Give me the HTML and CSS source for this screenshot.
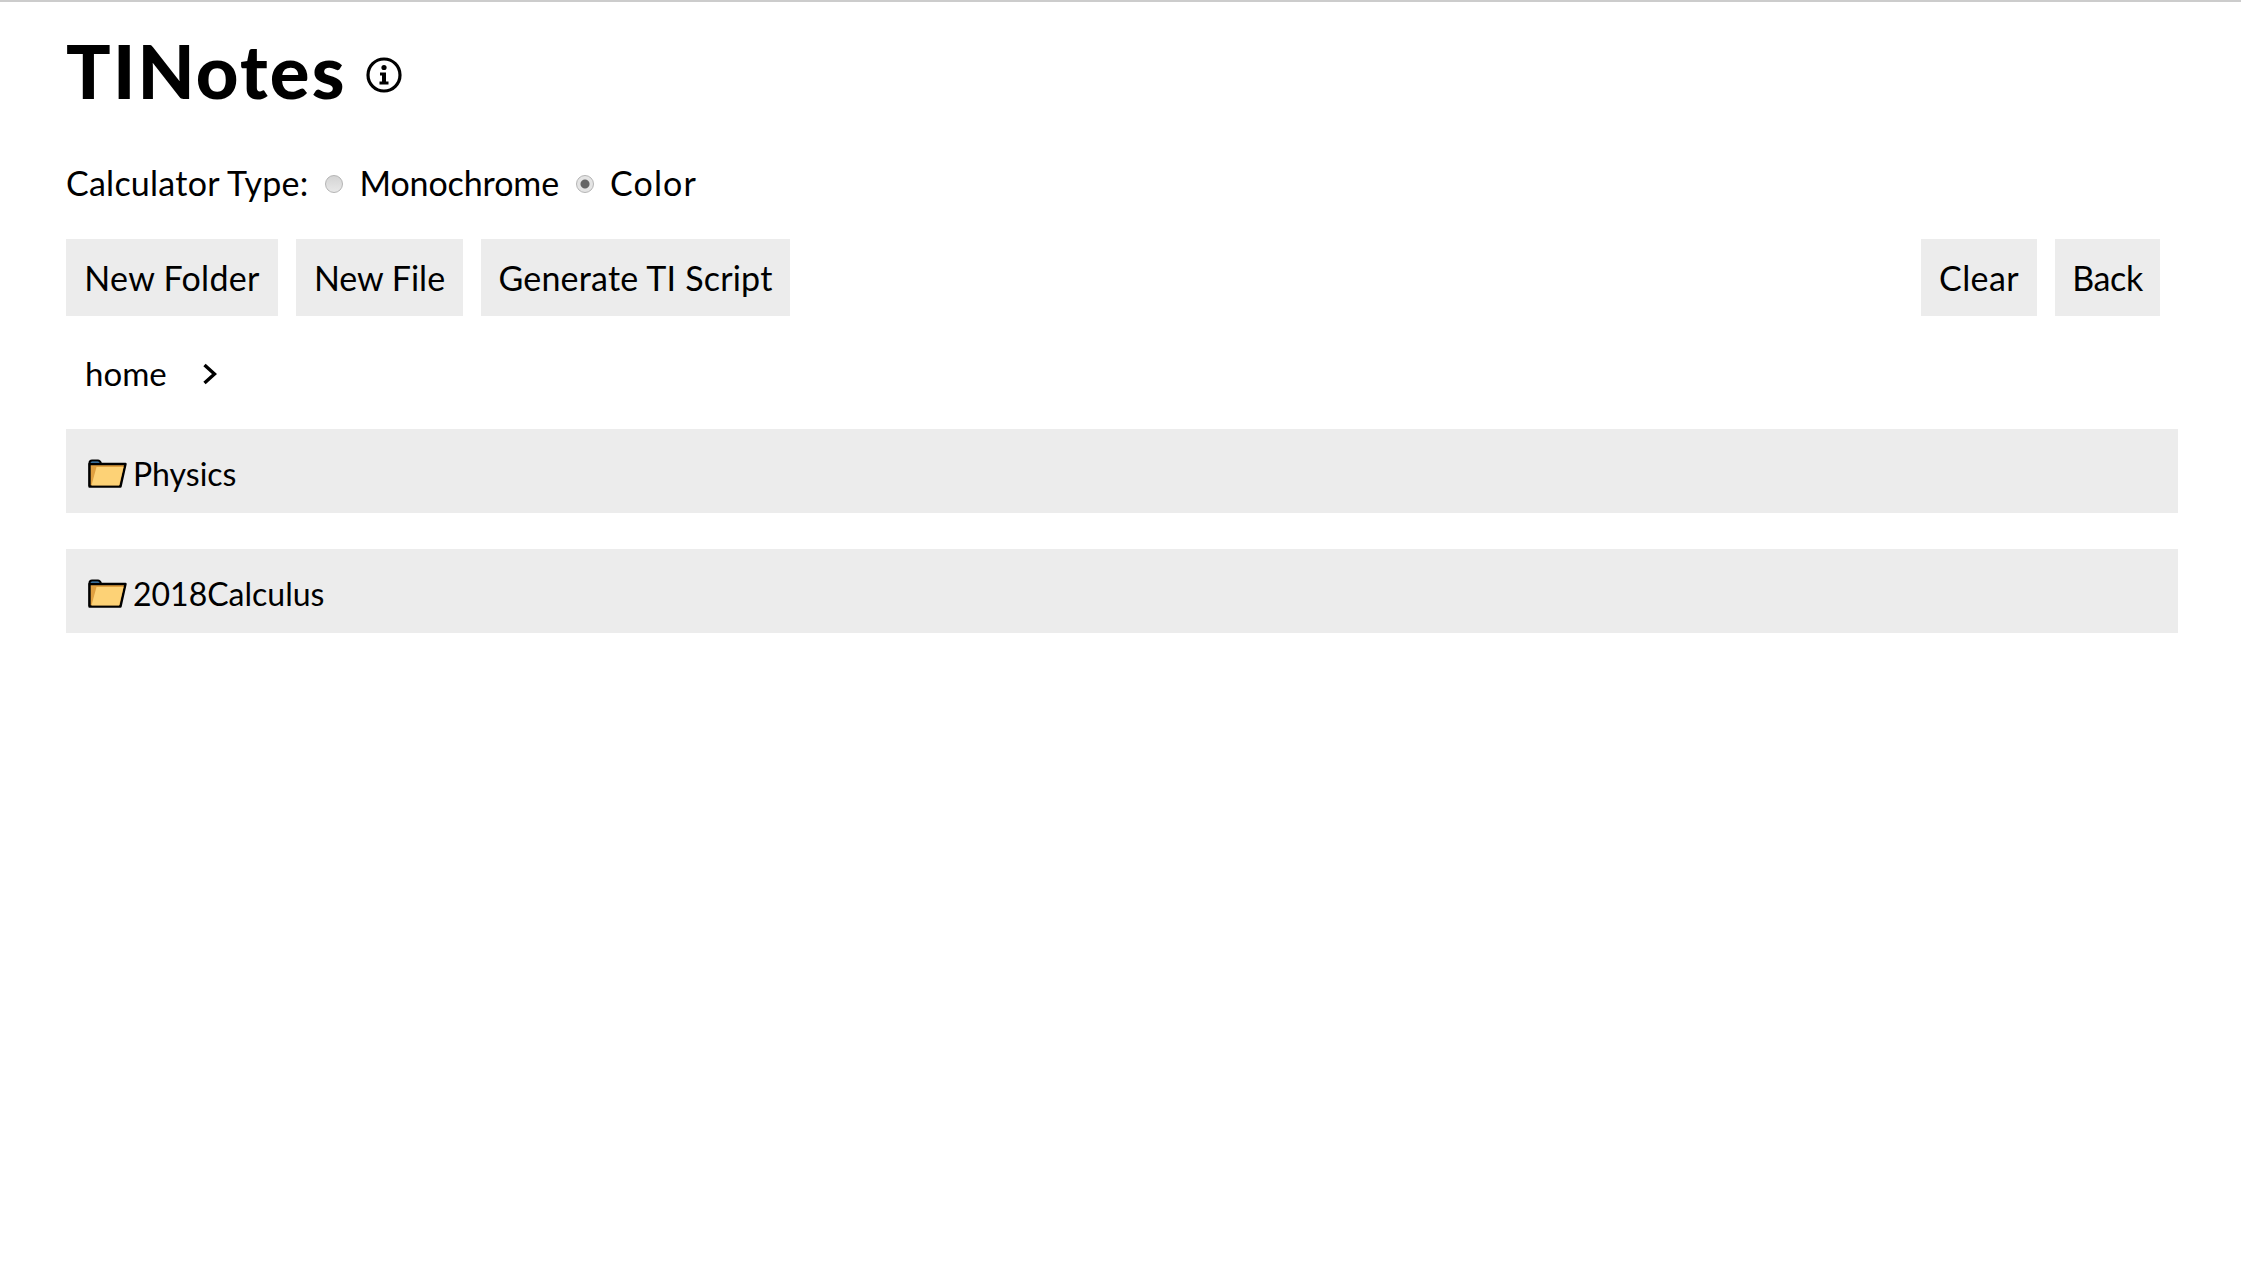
FILE: index.html
```html
<!DOCTYPE html>
<html lang="en">
<head>
  <meta charset="UTF-8" />
  <title>TINotes</title>
  <link rel="stylesheet" href="styles.css">
</head>
<body>
  <header class="title-block">
    <h1>TINotes</h1>
    <svg class="info-icon" viewBox="0 0 36 36" aria-hidden="true">
      <circle cx="18" cy="18" r="16" fill="none" stroke="#000" stroke-width="3.2"/>
      <circle cx="18" cy="10.5" r="2.6" fill="#000"/>
      <path d="M14 15.5h6v9h2.500v3h-9v-3H16v-6h-2z" fill="#000"/>
    </svg>
  </header>

  <div class="calc-type">
    <span class="calc-label">Calculator Type:</span>
    <input type="radio" name="calc" id="mono">
    <label class="label-mono" for="mono">Monochrome</label>
    <input type="radio" name="calc" id="color" checked>
    <label class="label-color" for="color">Color</label>
  </div>

  <div class="toolbar">
    <div class="toolbar-group">
      <button class="btn btn-folder">New Folder</button>
      <button class="btn btn-file">New File</button>
      <button class="btn btn-script">Generate TI Script</button>
    </div>
    <div class="toolbar-group">
      <button class="btn btn-clear">Clear</button>
      <button class="btn btn-back">Back</button>
    </div>
  </div>

  <nav class="breadcrumb">
    <span>home</span>
    <svg class="chevron" viewBox="0 0 14 22" aria-hidden="true">
      <path d="M1.500 2l10 9-10 9" fill="none" stroke="#000" stroke-width="3.400"/>
    </svg>
  </nav>

  <div class="item">
    <svg class="folder" viewBox="0 0 39 29" aria-hidden="true">
      <path d="M1.500 27V4q0-2.500 2.500-2.500h6q2 0 3 3z" fill="#4a90c8" stroke="#000" stroke-width="2"/>
      <path d="M1.500 27.500V5h36l-5 22.500z" fill="#e0a040" stroke="#000" stroke-width="2.400" stroke-linejoin="round"/>
      <path d="M3.500 26.500l5-18.500h27l-4.500 18.500z" fill="#fdd276"/>
    </svg>
    <span>Physics</span>
  </div>
  <div class="item">
    <svg class="folder" viewBox="0 0 39 29" aria-hidden="true">
      <path d="M1.500 27V4q0-2.500 2.500-2.500h6q2 0 3 3z" fill="#4a90c8" stroke="#000" stroke-width="2"/>
      <path d="M1.500 27.500V5h36l-5 22.500z" fill="#e0a040" stroke="#000" stroke-width="2.400" stroke-linejoin="round"/>
      <path d="M3.500 26.500l5-18.500h27l-4.500 18.500z" fill="#fdd276"/>
    </svg>
    <span>2018Calculus</span>
  </div>
</body>
</html>
```

FILE: styles.css
```css
body {
  font-family: "Lato", sans-serif;
  margin: 0;
  padding: 0 63px 0 66px;
  color: #000;
  background-color: #fff;
  border-top: 2px solid #ccc;
  font-size: 34px;
}

.title-block {
  display: flex;
  align-items: center;
  height: 146px;
}

.title-block h1 {
  font-size: 74px;
  font-weight: 900;
  margin: 0 0 8px;
  line-height: 138px;
  letter-spacing: 2.2px;
}

.info-icon {
  width: 36px;
  height: 36px;
  margin-left: 19px;
}

.calc-type {
  display: flex;
  align-items: center;
  height: 68px;
}

.calc-label {
  letter-spacing: 0.25px;
}

.label-mono {
  letter-spacing: -0.1px;
}

.label-color {
  letter-spacing: 1.1px;
}

.calc-type input {
  appearance: none;
  width: 18px;
  height: 18px;
  margin: 4px 16px 0 17px;
  border: 1px solid #b4b4b4;
  border-radius: 50%;
  background: linear-gradient(#d4d4d4, #e8e8e8);
  box-sizing: border-box;
}

.calc-type input:checked {
  background: radial-gradient(circle, #666 0, #666 4px, #e4e4e4 5px);
}

.toolbar {
  display: flex;
  justify-content: space-between;
  margin-top: 23px;
}

.toolbar-group {
  display: flex;
}

.btn {
  font-family: inherit;
  font-size: 34px;
  color: #000;
  height: 77px;
  padding: 0;
  margin-right: 18px;
  border: none;
  border-radius: 0;
  background-color: #ececec;
}

.btn-folder { width: 212px; letter-spacing: 0.3px; }
.btn-file { width: 167px; }
.btn-script { width: 309px; letter-spacing: 0.2px; }
.btn-clear { width: 116px; letter-spacing: 0.4px; }
.btn-back { width: 105px; letter-spacing: -0.4px; }

.breadcrumb {
  display: flex;
  align-items: center;
  height: 113px;
  padding-left: 19px;
  font-size: 33px;
}

.chevron {
  width: 14px;
  height: 22px;
  margin-left: 36px;
  margin-top: 3px;
}

.item {
  display: flex;
  align-items: center;
  height: 84px;
  margin-bottom: 36px;
  padding-left: 22px;
  background-color: #ececec;
  font-size: 32px;
}

.item span {
  padding-top: 4px;
}

.folder {
  width: 39px;
  height: 29px;
  margin-right: 6px;
  margin-top: 5px;
}
```
